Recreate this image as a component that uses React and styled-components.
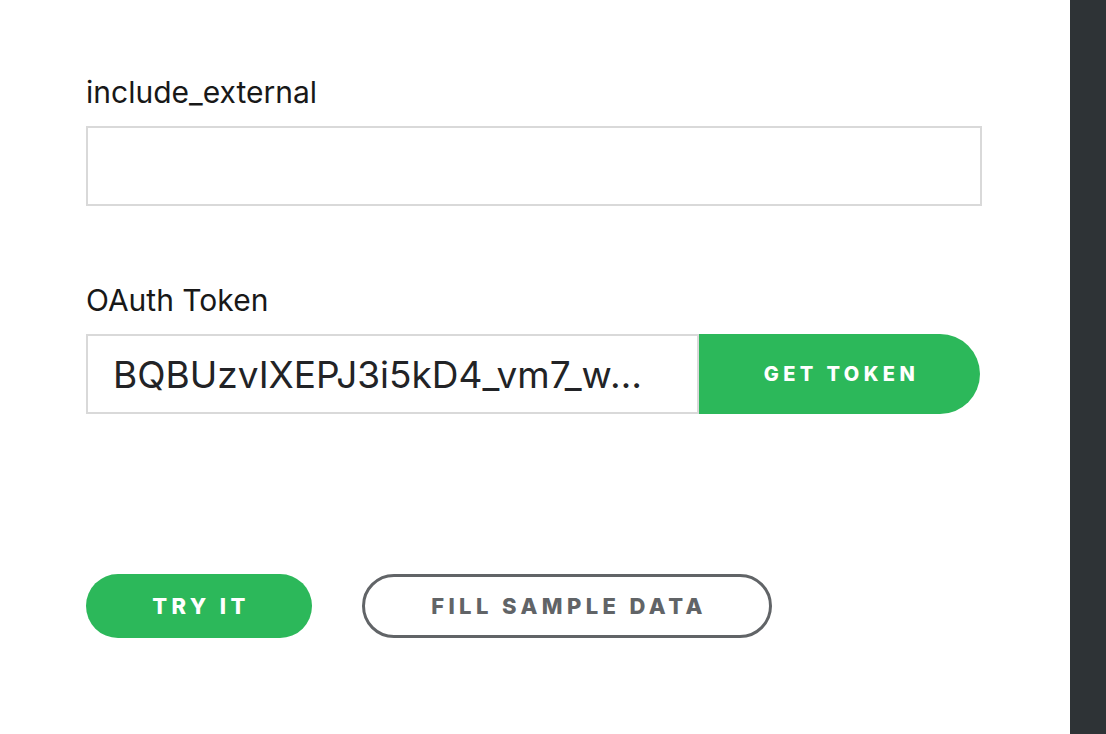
import styled, { createGlobalStyle } from 'styled-components'

const GREEN = '#2cb85a'
const GREY = '#616467'

const GlobalStyle = createGlobalStyle`
  html, body {
    margin: 0;
    padding: 0;
    background: #fff;
  }
  body {
    font-family: 'Inter', 'Noto Sans', sans-serif;
    color: #181818;
  }
`

const Page = styled.div`
  display: flex;
  height: 734px;
  overflow: hidden;
`

const Main = styled.main`
  flex: 1;
  padding: 74px 88px 0 86px;
`

const Field = styled.div`
  margin-bottom: ${({ $gap }) => $gap}px;
`

const Label = styled.label`
  display: block;
  font-size: 30px;
  line-height: 36px;
  font-weight: 400;
  color: #181818;
  margin-bottom: 16px;
`

const InputRow = styled.div`
  display: flex;
`

const TextInput = styled.input`
  box-sizing: border-box;
  flex: ${({ $grow }) => ($grow ? 1 : 'none')};
  width: ${({ $width }) => $width};
  height: 80px;
  border: 2px solid #d9d9d9;
  padding: 0 46px 0 25px;
  font-family: inherit;
  font-size: 37px;
  color: #222326;
  text-overflow: ellipsis;
  outline: none;
  background: #fff;
`

const TokenBtn = styled.button`
  box-sizing: border-box;
  width: 281px;
  height: 80px;
  padding: 0 0 0 4px;
  border: none;
  border-radius: 0 40px 40px 0;
  background: ${GREEN};
  color: #fff;
  font-family: inherit;
  font-size: 20px;
  font-weight: 800;
  letter-spacing: 4.4px;
  cursor: pointer;
`

const Actions = styled.div`
  display: flex;
  gap: 50px;
`

const PillBtn = styled.button`
  box-sizing: border-box;
  width: ${({ $width }) => $width}px;
  height: 64px;
  padding: 0 0 0 4px;
  border-radius: 32px;
  border: ${({ $outline }) => ($outline ? `3px solid ${GREY}` : 'none')};
  background: ${({ $outline }) => ($outline ? '#fff' : GREEN)};
  color: ${({ $outline }) => ($outline ? GREY : '#fff')};
  font-family: inherit;
  font-size: 22px;
  font-weight: 800;
  letter-spacing: 4.4px;
  cursor: pointer;
`

const Sidebar = styled.aside`
  width: 36px;
  background: #2e3336;
`

export default function App() {
  return (
    <>
      <GlobalStyle />
      <Page>
        <Main>
          <Field $gap={76}>
            <Label>include_external</Label>
            <InputRow>
              <TextInput $grow type="text" />
            </InputRow>
          </Field>

          <Field $gap={160}>
            <Label>OAuth Token</Label>
            <InputRow>
              <TextInput
                $width="613px"
                type="text"
                defaultValue="BQBUzvIXEPJ3i5kD4_vm7_wT3xQpLm9sKdR2"
              />
              <TokenBtn type="button">GET TOKEN</TokenBtn>
            </InputRow>
          </Field>

          <Actions>
            <PillBtn $width={226} type="button">TRY IT</PillBtn>
            <PillBtn $width={410} $outline type="button">FILL SAMPLE DATA</PillBtn>
          </Actions>
        </Main>
        <Sidebar />
      </Page>
    </>
  )
}
